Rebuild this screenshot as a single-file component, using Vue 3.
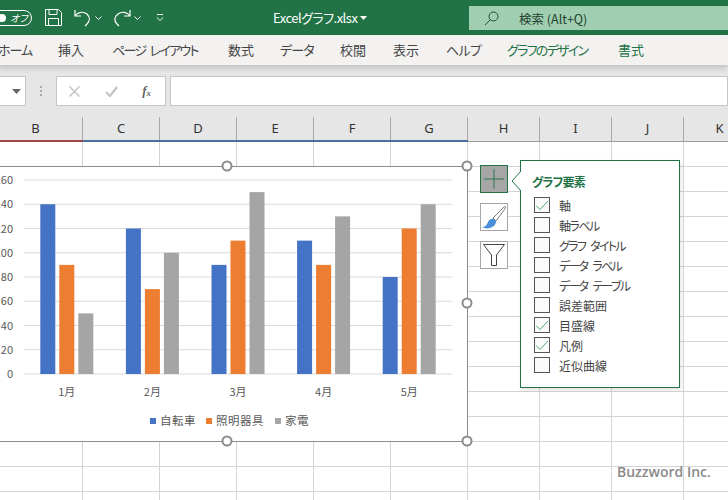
<script setup>
const tabs = [
  { name: 'ホーム', width: 60, ls: -1 },
  { name: '挿入', width: 54, ls: 0 },
  { name: 'ページ レイアウト', width: 116, ls: -1.7 },
  { name: '数式', width: 52, ls: 0 },
  { name: 'データ', width: 60, ls: -.8 },
  { name: '校閲', width: 53, ls: 0 },
  { name: '表示', width: 53, ls: 0 },
  { name: 'ヘルプ', width: 61, ls: -.6 },
  { name: 'グラフのデザイン', width: 111, ls: -1.7, chart: true },
  { name: '書式', width: 26, ls: 0, chart: true },
]

const columns = [
  { name: 'B', width: 94, sel: 'red' },
  { name: 'C', width: 77, sel: 'blue' },
  { name: 'D', width: 77, sel: 'blue' },
  { name: 'E', width: 77, sel: 'blue' },
  { name: 'F', width: 77, sel: 'blue' },
  { name: 'G', width: 77, sel: 'blue' },
  { name: 'H', width: 72 },
  { name: 'I', width: 72 },
  { name: 'J', width: 72 },
  { name: 'K', width: 72 },
]
const rows = Array(15).fill(0)

// chart data
const months = ['1月', '2月', '3月', '4月', '5月']
const colors = ['#4472c4', '#ed7d31', '#a5a5a5']
const data = [
  [140, 90, 50],
  [120, 70, 100],
  [90, 110, 150],
  [110, 90, 130],
  [80, 120, 140],
]
const ticks = [0, 20, 40, 60, 80, 100, 120, 140, 160]
const baseY = 374
const unit = 1.2125
const plotLeft = 24
const band = 85.6
const tickY = (v) => baseY - v * unit
const barX = (m, s) => plotLeft + band * m + band / 2 - 26.5 + s * 19
const legend = [
  { name: '自転車', x: 150, tx: 160, color: '#4472c4' },
  { name: '照明器具', x: 206, tx: 216, color: '#ed7d31' },
  { name: '家電', x: 275, tx: 285, color: '#a5a5a5' },
]
const handles = [[227, 166], [467, 166], [467, 303], [227, 441], [467, 441]]

const elements = [
  { name: '軸', on: true, ls: 0 },
  { name: '軸ラベル', on: false, ls: -1.5 },
  { name: 'グラフ タイトル', on: false, ls: -1.7 },
  { name: 'データ ラベル', on: false, ls: -1.7 },
  { name: 'データ テーブル', on: false, ls: -1.7 },
  { name: '誤差範囲', on: false, ls: 0 },
  { name: '目盛線', on: true, ls: 0 },
  { name: '凡例', on: true, ls: 0 },
  { name: '近似曲線', on: false, ls: 0 },
]
</script>

<template>
  <div class="app">
    <header class="titlebar">
      <div class="toggle"><span class="dot"></span><span class="off">オフ</span></div>
      <svg class="save" width="17" height="17" viewBox="0 0 17 17" fill="none" stroke="#fff" stroke-width="1">
        <path d="M.5.5h13l3 3v13H.5z" />
        <path d="M4 .5v5h8v-5M3.5 16.5v-7h10v7" />
      </svg>
      <svg class="undo" width="17" height="18" viewBox="0 0 17 18" fill="none" stroke="#fff" stroke-width="1.2">
        <path d="M1 1v6h6" />
        <path d="M1 7c3-4 8-5 12-2 3 3 3 7 0 10l-2 2" />
      </svg>
      <svg class="chev c1" width="7" height="4" viewBox="0 0 7 4" fill="none" stroke="#fff"><path d="M.5.5l3 3 3-3" /></svg>
      <svg class="redo" width="18" height="18" viewBox="0 0 18 18" fill="none" stroke="#fff" stroke-width="1.2">
        <path d="M17 1v6h-6" />
        <path d="M17 7c-3-4-8-5-12-2-4 3-4 7-1 10l2 2" />
      </svg>
      <svg class="chev c2" width="7" height="4" viewBox="0 0 7 4" fill="none" stroke="#fff"><path d="M.5.5l3 3 3-3" /></svg>
      <svg class="qat" width="8" height="8" viewBox="0 0 8 8" fill="none" stroke="#fff" stroke-width="1">
        <path d="M1 .5h6M1 3.500l3 3 3-3" />
      </svg>
      <div class="filename">Excelグラフ.xlsx</div>
      <svg class="name-arrow" width="7" height="4" viewBox="0 0 7 4" fill="#fff"><path d="M0 0h7L3.500 4z" /></svg>
      <div class="search">
        <svg width="15" height="15" viewBox="0 0 15 15" fill="none" stroke="#2b4a38" stroke-width="1">
          <circle cx="9.500" cy="5.500" r="4.500" />
          <path d="M6 9l-5 5" />
        </svg>
        <span>検索 (Alt+Q)</span>
      </div>
    </header>

    <nav class="ribbon">
      <div
        v-for="tab in tabs"
        :key="tab.name"
        class="tab"
        :class="{ chart: tab.chart }"
        :style="{ width: tab.width + 'px', letterSpacing: tab.ls + 'px' }"
      >{{ tab.name }}</div>
    </nav>

    <section class="formula">
      <div class="namebox">
        <svg width="9" height="5" viewBox="0 0 9 5" fill="#666"><path d="M0 0h9L4.500 5z" /></svg>
      </div>
      <div class="dots"><i></i><i></i><i></i></div>
      <div class="fbtns">
        <svg width="11" height="11" viewBox="0 0 11 11" stroke="#c4c4c4" stroke-width="1.500"><path d="M.5.5l10 10M10.500.5l-10 10" /></svg>
        <svg width="13" height="11" viewBox="0 0 13 11" fill="none" stroke="#c4c4c4" stroke-width="2.200"><path d="M1 6l4 4 7-9" /></svg>
        <span class="fx">f<sub>x</sub></span>
      </div>
      <div class="finput"></div>
    </section>

    <div class="colhead">
      <div v-for="col in columns" :key="col.name" class="col" :class="col.sel" :style="{ width: col.width + 'px' }">{{ col.name }}</div>
    </div>

    <main class="sheet">
      <div v-for="(r, i) in rows" :key="i" class="row">
        <div v-for="col in columns" :key="col.name" class="cell" :style="{ width: col.width + 'px' }"></div>
      </div>

      <svg class="chartbox" width="728" height="358" viewBox="0 142 728 358">
        <rect x="-10" y="166.500" width="477.500" height="275" fill="#fff" stroke="#8c8c8c" />
        <line v-for="t in ticks" :key="t" :x1="plotLeft" :x2="452" :y1="tickY(t)" :y2="tickY(t)" stroke="#d9d9d9" />
        <text v-for="t in ticks" :key="'l' + t" class="axis" x="13" :y="tickY(t) + 4" text-anchor="end">{{ t }}</text>
        <g v-for="(vals, m) in data" :key="m">
          <rect v-for="(v, s) in vals" :key="s" :x="barX(m, s)" :y="tickY(v)" width="15" :height="v * unit" :fill="colors[s]" />
          <text class="axis" :x="plotLeft + band * m + band / 2" y="396" text-anchor="middle">{{ months[m] }}</text>
        </g>
        <g v-for="item in legend" :key="item.name">
          <rect :x="item.x" y="418" width="6" height="6" :fill="item.color" />
          <text class="axis spaced" :x="item.tx" y="425">{{ item.name }}</text>
        </g>
        <circle v-for="h in handles" :key="h.join()" :cx="h[0]" :cy="h[1]" r="4.500" fill="#fff" stroke="#8c8c8c" stroke-width="2" />
      </svg>

      <div class="sidebtns">
        <button class="sidebtn active">
          <svg width="28" height="28" viewBox="0 0 28 28" stroke="#217346" stroke-width="1"><path d="M14 3.500v21M3.500 14h21" /></svg>
        </button>
        <button class="sidebtn">
          <svg width="26" height="26" viewBox="0 0 26 26" fill="none">
            <path d="M12 14L23 3c1-1 2.200 0 1.400 1.200L15 17z" fill="#fff" stroke="#555" stroke-width=".8" />
            <path d="M1 23c3 0 5-2 6-5 1-2 3-4 6-3l2 2c0 4-3 6-6 7-3 1-6 0-8-1z" fill="#4a90d9" />
          </svg>
        </button>
        <button class="sidebtn">
          <svg width="26" height="26" viewBox="0 0 26 26" fill="#fff" stroke="#444" stroke-width="1"><path d="M2.500 2.500h21L15.500 13v10.500h-5V13z" /></svg>
        </button>
      </div>

      <aside class="panel">
        <svg class="notch" width="10" height="20" viewBox="0 0 10 20"><path d="M10 0L1 10l9 10" fill="#fff" stroke="#217346" /></svg>
        <h3>グラフ要素</h3>
        <ul>
          <li v-for="el in elements" :key="el.name">
            <span class="check">
              <svg v-if="el.on" width="14" height="11" viewBox="0 0 14 11" fill="none" stroke="#4fa971" stroke-width="1"><path d="M1 5.500L5 9.500 13 1" /></svg>
            </span>
            <span :style="{ letterSpacing: el.ls + 'px' }">{{ el.name }}</span>
          </li>
        </ul>
      </aside>

      <div class="watermark">Buzzword Inc.</div>
    </main>
  </div>
</template>

<style scoped>
.app {
  width: 728px;
  height: 500px;
  overflow: hidden;
  display: flex;
  flex-direction: column;
  background: #e6e6e6;
  font-family: "Noto Sans CJK JP", "Noto Sans", sans-serif;
  font-feature-settings: "palt";
  color: #444;
}

.titlebar {
  height: 35px;
  flex: none;
  display: flex;
  align-items: center;
  background: #217346;
  color: #fff;
}
.toggle {
  width: 56px;
  height: 16px;
  margin-left: -24px;
  border: 1px solid #fff;
  border-radius: 9px;
  box-sizing: border-box;
  display: flex;
  align-items: center;
  padding-left: 21px;
  gap: 4px;
  flex: none;
}
.dot {
  width: 8px;
  height: 8px;
  background: #fff;
  border-radius: 50%;
  flex: none;
}
.off {
  font-size: 10px;
  font-style: italic;
  white-space: nowrap;
}
.save { margin-left: 13px; flex: none; }
.undo { margin-left: 12px; flex: none; }
.chev { flex: none; }
.c1 { margin-left: 4px; }
.redo { margin-left: 11px; flex: none; }
.c2 { margin-left: 3px; }
.qat { margin-left: 15px; flex: none; }
.filename {
  margin-left: 109px;
  width: 82px;
  flex: none;
  font-size: 13px;
  letter-spacing: -.5px;
  white-space: nowrap;
}
.name-arrow { margin-left: 5px; flex: none; }
.search {
  margin-left: 102px;
  flex: 1;
  height: 24px;
  align-self: flex-start;
  margin-top: 6px;
  background: #9fcfb0;
  display: flex;
  align-items: center;
  gap: 20px;
  padding-left: 15px;
  color: #24402f;
  font-size: 12.500px;
}

.ribbon {
  height: 30px;
  flex: none;
  display: flex;
  align-items: center;
  padding-bottom: 1px;
  box-sizing: border-box;
  margin-left: -2px;
  background: #f3f2f1;
  box-shadow: 0 3px 6px rgba(0, 0, 0, .16);
  position: relative;
  font-size: 13px;
  word-spacing: 3px;
  color: #444;
  white-space: nowrap;
}
.tab { flex: none; }
.tab.chart { color: #217346; }

.formula {
  height: 52px;
  flex: none;
  box-sizing: border-box;
  padding: 11px 0 11px 0;
  display: flex;
  align-items: stretch;
}
.namebox {
  width: 10px;
  margin-left: -10px;
  padding-left: 20px;
  background: #fff;
  border: 1px solid #c6c6c6;
  display: flex;
  align-items: center;
  justify-content: flex-end;
  padding-right: 4px;
}
.dots {
  width: 30px;
  display: flex;
  flex-direction: column;
  align-items: center;
  justify-content: center;
  gap: 2px;
}
.dots i {
  width: 2px;
  height: 2px;
  background: #aaa;
}
.fbtns {
  width: 110px;
  background: #fff;
  border: 1px solid #c6c6c6;
  display: flex;
  align-items: center;
  justify-content: space-between;
  padding: 0 14px 0 12px;
  box-sizing: border-box;
}
.fx {
  font-family: "Liberation Serif", serif;
  font-style: italic;
  font-weight: bold;
  font-size: 13px;
  color: #666;
}
.fx sub {
  font-size: 9px;
  vertical-align: -1px;
}
.finput {
  flex: 1;
  margin-left: 4px;
  background: #fff;
  border: 1px solid #c6c6c6;
}

.colhead {
  height: 25px;
  flex: none;
  display: flex;
  margin-left: -11px;
  box-sizing: border-box;
  border-bottom: 1px solid #9c9c9c;
}
.col {
  flex: none;
  box-sizing: border-box;
  border-right: 1px solid #a8a8a8;
  text-align: center;
  font-family: "Noto Sans", sans-serif;
  font-size: 13px;
  line-height: 23px;
  color: #333;
  position: relative;
}
.col.red::after,
.col.blue::after {
  content: "";
  position: absolute;
  left: 0;
  right: -1px;
  bottom: -1px;
  height: 2px;
}
.col.red::after { background: #a4474c; }
.col.blue::after { background: #4a6f9f; }

.sheet {
  flex: 1;
  position: relative;
  background: #fff;
  overflow: hidden;
}
.row {
  display: flex;
  margin-left: -11px;
  height: 25px;
}
.cell {
  flex: none;
  box-sizing: border-box;
  border-right: 1px solid #d4d4d4;
  border-bottom: 1px solid #d4d4d4;
}

.chartbox {
  position: absolute;
  left: 0;
  top: 0;
}
.axis {
  font-size: 11px;
  fill: #595959;
  font-family: "Noto Sans CJK JP", sans-serif;
}
.spaced { font-size: 11.500px; letter-spacing: .5px; }

.sidebtns {
  position: absolute;
  left: 480px;
  top: 23px;
  display: flex;
  flex-direction: column;
  gap: 10px;
}
.sidebtn {
  width: 28px;
  height: 28px;
  padding: 0;
  box-sizing: border-box;
  background: #fff;
  border: 1px solid #a6a6a6;
  display: flex;
  align-items: center;
  justify-content: center;
}
.sidebtn.active {
  background: #a6a6a6;
  border-color: #217346;
}

.panel {
  position: absolute;
  left: 520px;
  top: 18px;
  width: 160px;
  height: 228px;
  box-sizing: border-box;
  background: #fff;
  border: 1px solid #217346;
  box-shadow: 1px 2px 4px rgba(0, 0, 0, .12);
  padding: 13px 0 0 11px;
}
.notch {
  position: absolute;
  left: -10px;
  top: 10px;
}
.panel h3 {
  margin: 0;
  font-size: 12px;
  line-height: 16px;
  font-weight: bold;
  letter-spacing: -.8px;
  color: #217346;
}
.panel ul {
  list-style: none;
  margin: 5px 0 0;
  padding: 0 0 0 2px;
}
.panel li {
  height: 20px;
  display: flex;
  align-items: center;
  gap: 9px;
  font-size: 12px;
  word-spacing: 4px;
  color: #444;
  white-space: nowrap;
}
.check {
  width: 16px;
  height: 16px;
  flex: none;
  box-sizing: border-box;
  border: 1px solid #555;
  background: #fbfbfb;
  display: flex;
  align-items: center;
  justify-content: center;
}

.watermark {
  position: absolute;
  left: 617px;
  top: 320px;
  font-family: "Open Sans", sans-serif;
  font-weight: 600;
  font-size: 14px;
  color: #8a8a8a;
}
</style>

<style>
body { background: #fff; }
</style>
